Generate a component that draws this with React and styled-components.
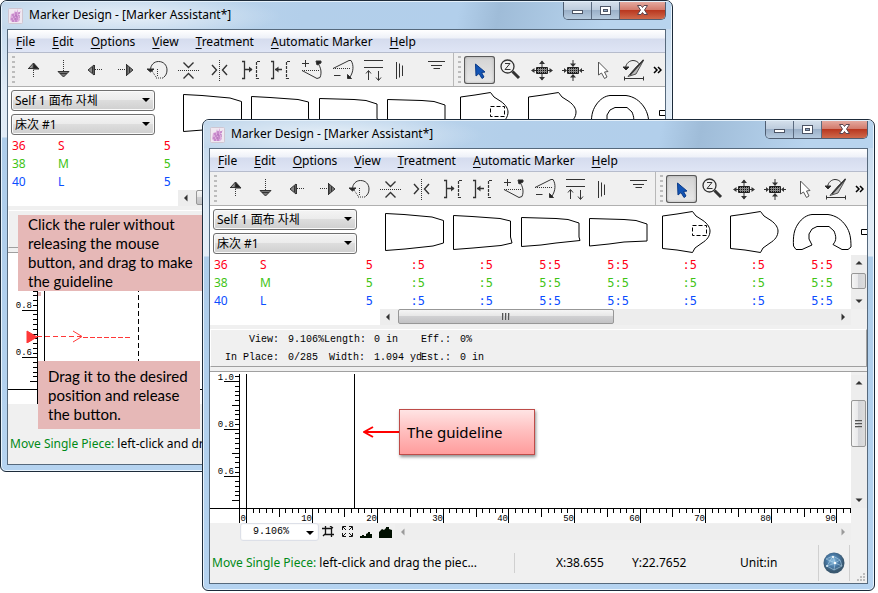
import { useState } from "react";
import styled, { createGlobalStyle, css } from "styled-components";

const menus = ["File", "Edit", "Options", "View", "Treatment", "Automatic Marker", "Help"];

const sizes = [
  { code: "36", name: "S", color: "#ff0018" },
  { code: "38", name: "M", color: "#3fc417" },
  { code: "40", name: "L", color: "#0a4dff" },
];
const counts = ["5", ":5", ":5", "5:5", "5:5", ":5", ":5", "5:5"];

const pieces = [
  "M5.5 7.5L24 8.5L52 11L63.5 14.5V37L53 40L25 43L5.5 44.5Z",
  "M5.5 9.5L24 10.5L52 12.5L62.5 15V31L64 37L53 39.5L25 42L5.5 43.5Z",
  "M5.5 11.5L40 12.5L52 13.5L63 17V31L64 34.5L40 37L25 39L5.5 40.5Z",
  "M5.5 12.5L40 13.5L52 14.5L63 18V35L40 36L25 38L5.5 40Z",
  "M10.5 10L25 8L40.5 5.5L44 10L51 14.5C56 18 58 22 58 25C58 30 55 34 50 37L43 42L40.5 46.5L25 44L10.5 42.5Z",
  "M10.5 10L25 8L40.5 5.5L44 10L51 14.5C56 18 58 22 58 25C58 30 55 34 50 37L43 42L40.5 46.5L25 44L10.5 42.5Z",
  "M5.5 40C5 30 6 24 10 18C14 12 19 9 24 8.5H40C48 9.5 54 14 58 20C62 26 63 32 63 41L60 43.5H54L45 38.5C49 34 48 30 46 25L41 20.5H29L24 23L21 28V33L24 39L14 43.5H8Z",
  "M5.5 23.5H30V28.5H5.5Z",
];

const moveTools = [
  { name: "Move up", art: <><path d="M15.5 7L21 13H10Z" fill="#999" stroke="none" /><path d="M15.5 7L21 13H15Z" fill="#222" /><path d="M10 12.5H21M15.5 7L10.5 12.5" /><path className="dots" d="M15.5 14V22" /></> },
  { name: "Move down", art: <><path className="dots" d="M14.5 4V15" /><path d="M9 15.5H20L14.5 21Z" fill="#777" /><path d="M9 15.5H20M11 17.5H18" /></> },
  { name: "Move left", art: <><path d="M8 14L14 9V19Z" fill="#888" /><path d="M14.5 9V19M12.5 11V17" /><path className="dots" d="M15 13.5H23" /></> },
  { name: "Move right", art: <><path className="dots" d="M7 13.5H15" /><path d="M22 14L16 9V19Z" fill="#777" /><path d="M15.5 8V20M18.5 11V17" /></> },
  { name: "Rotate", art: <><path d="M8.500 14C8.500 9 12 5.500 16.500 5.500C21.500 5.500 25 9 25 14C25 17 24 19.500 21.500 21.500" /><path className="dots" d="M21 22H13M15.500 13V21M10 15L14 21" /><path d="M5 13H12L8.500 16Z" fill="#222" /></> },
  { name: "Flip vertical", art: <><path d="M10.500 6.500L15.500 11.500L20.500 6.500M10.500 22.500L15.500 17.500L20.500 22.500" strokeWidth="1.400" /><path className="dots" d="M5 14.500H26" /></> },
  { name: "Flip horizontal", art: <><path d="M8 9L12.500 14L8 19M23 9L18.500 14L23 19" strokeWidth="1.400" /><path className="dots" d="M15.500 4V25" /></> },
  { name: "Butt right", art: <><path d="M7 5.500H9.500V22.500H7M10 13.500H17" strokeWidth="1.300" /><path d="M14 10.500V16.500L17.500 13.500Z" fill="#333" stroke="none" /><path d="M25 5.500H21.500V22.500H25" strokeDasharray="3 1" strokeWidth="1.200" /></> },
  { name: "Butt left", art: <><path d="M5 5.500H7.500V22.500H5M9 13.500H16" strokeWidth="1.300" /><path d="M12.500 10.500V16.500L9 13.500Z" fill="#333" stroke="none" /><path d="M24 5.500H20.500V22.500H24" strokeDasharray="3 1" strokeWidth="1.200" /></> },
  { name: "Tilt up", art: <><path d="M8.500 4V11M5 7.500H12" /><path d="M5 14.500L20 22.500L23 21.500C25 17 24 11 20.500 7" /><path className="dots" d="M5 14.500H23" /><path d="M19 5H24V7L20 9Z" fill="#222" /></> },
  { name: "Tilt down", art: <><path d="M5 12.500L21 4.500H23C26 9 25.500 16 22 21" /><path className="dots" d="M5 12.500H23" /><path d="M19.500 18.500V22.500H23.500Z" fill="#222" /><path d="M6 19.500H12.500" /></> },
  { name: "Align edge", art: <><path d="M5 4.500H24M5 11.500H24M9.500 15V24M19.500 15V24" /><path d="M7 17.500L9.500 14.500L12 17.500M17 21.500L19.500 24.500L22 21.500" /></> },
  { name: "Align left", art: <path d="M6.500 6V23M9.500 7.500V21.500M12.500 9.500V20" /> },
  { name: "Align top", art: <path d="M7 5.500H24M10 9.500H21M12.500 12.500H19" /> },
];

const hatch = (
  <>
    <path d="M10.500 11.500H21.500V17.500H10.500Z" fill="#888" stroke="#222" />
    <path d="M11 12.500H21M11 14.500H21M11 16.500H21" strokeDasharray="1 1" stroke="#111" />
  </>
);

const selectTools = [
  { name: "Select", art: <path d="M11.500 8L12 20L15 17.500L18 22.500L20 21L17.500 16.500L21 16Z" fill="#1254b5" stroke="#0b3b88" /> },
  { name: "Zoom", art: <><circle cx="12.500" cy="10.500" r="6.500" strokeWidth="1.300" /><path d="M10 7.500H15L10 13.500H15.500" /><path d="M17.500 15.500L24 22" strokeWidth="3" /></> },
  { name: "Spread", art: <>{hatch}<path d="M16 5V11M16 18V24M6 14.500H10M22 14.500H26" /><path d="M13 8L16 4.500L19 8ZM13 21L16 24.500L19 21ZM8.500 12L5 14.500L8.500 17ZM23.500 12L27 14.500L23.500 17Z" fill="#333" stroke="none" /></> },
  { name: "Gather", art: <>{hatch}<path d="M16 4V10M16 19V25M5 14.500H9M23 14.500H27" /><path d="M13 7.500L16 11L19 7.500ZM13 21.500L16 18L19 21.500ZM7 12L10 14.500L7 17ZM25 12L22 14.500L25 17Z" fill="#333" stroke="none" /></> },
  { name: "Pick", art: <path d="M10.500 6V19L13.500 17L16.500 22.500L19 21L16.500 16L20 15.500Z" fill="#fff" stroke="#555" /> },
  { name: "Angle", art: <><path d="M5 22.500H25M5.500 20.500V24.500M24.500 20.500V24.500" /><path d="M24.500 4L17 11L9 20.500L17 18L22 9Z" fill="#bbb" strokeWidth=".8" /><path d="M24.500 4L11 19" strokeWidth="1.400" /><path d="M6.500 12C7 7 11 4.500 14 4.500C17 4.500 19 6 20.500 8" /><path d="M4 11H10L7 14Z" fill="#222" /></> },
];

const Icon = ({ children }) => <ToolArt viewBox="0 0 31 28" aria-hidden="true">{children}</ToolArt>;

const Arrow = ({ dir }) => {
  const d = { up: "M.5 5.500L4 2L7.500 5.500Z", down: "M.5 2.500L4 6L7.500 2.500Z", left: "M2 4L5.500 .5V7.500Z", right: "M6 4L2.500 .5V7.500Z" }[dir];
  return <svg width="8" height="8" viewBox="0 0 8 8" aria-hidden="true"><path d={d} fill="currentColor" /></svg>;
};

const ScrollBar = ({ vertical, thumb, offset, idle }) => (
  <Track $vertical={vertical} $idle={idle}>
    <ScrollButton aria-label={vertical ? "Scroll up" : "Scroll left"}><Arrow dir={vertical ? "up" : "left"} /></ScrollButton>
    <Lane $vertical={vertical}>
      {thumb && (
        <Thumb $vertical={vertical} $size={thumb} $offset={offset}>
          {(!vertical || thumb > 20) && <Gripper $vertical={vertical} />}
        </Thumb>
      )}
    </Lane>
    <ScrollButton aria-label={vertical ? "Scroll down" : "Scroll right"}><Arrow dir={vertical ? "down" : "right"} /></ScrollButton>
  </Track>
);

const Rulers = ({ guide, dragging }) => {
  const rows = Array.from({ length: 27 }, (_, i) => i);
  const cols = Array.from({ length: 140 }, (_, i) => i);
  const heights = ["1.0", "0.8", "0.6"];
  return (
    <Drawing>
      <path d="M29.500 2V151M36.500 2V151" />
      <line x1="0" x2="100%" y1="136.500" y2="136.500" />
      <path d={`M${guide + 0.5} 2V136`} strokeDasharray={dragging ? "5 3" : "none"} />
      {rows.map((i) => {
        const y = Math.round(9 + (i - 1) * 4.77) + 0.5;
        const len = (i - 1) % 10 === 0 ? 15 : (i - 1) % 5 === 0 ? 7 : 4;
        return y < 135 && !(dragging && y < 12) ? <path key={i} d={`M${29 - len} ${y}H29`} /> : null;
      })}
      {heights.map((t, i) => (dragging && i === 0 ? null : <text key={t} x="24" y={8 + i * 47}>{t}</text>))}
      {!dragging && cols.map((i) => {
        const x = Math.round(36 + i * 6.56) + 0.5;
        const len = i % 10 === 0 ? 15 : i % 5 === 0 ? 8 : 4;
        return <path key={i} d={`M${x} 137V${137 + len}`} />;
      })}
      {!dragging && cols.slice(0, 91).filter((i) => i % 10 === 0).map((i) => (
        <text key={i} x={Math.round(36 + i * 6.56)} y="149">{i}</text>
      ))}
    </Drawing>
  );
};

const MarkerWindow = ({ guide, dragging }) => {
  const [fabric, setFabric] = useState("Self 1 面布 자체");
  const [tool, setTool] = useState("Select");

  return (
    <Frame>
      <TitleBar>
        <AppIcon viewBox="0 0 15 16" aria-hidden="true">
          <rect x=".5" y=".5" width="14" height="15" rx="1" fill="#f0e8f1" stroke="#cfc6d2" />
          <path d="M3 6L6 5L7 2L8 5L10 1L10 5L13 3L11 7L12 12L10 14H4L2 12Z" fill="#dcaadc" />
          <path d="M4 7H10M5 9H12M3 11H10M4 13H9M8 4V13M11 4V8" stroke="#b069b8" strokeDasharray="2 1" />
        </AppIcon>
        <Title>Marker Design - [Marker Assistant*]</Title>
        <Caption>
          <CaptionButton aria-label="Minimize"><svg width="13" height="10"><rect x="1.500" y="4.500" width="10" height="3" fill="#fff" stroke="#4d5566" /></svg></CaptionButton>
          <CaptionButton aria-label="Maximize"><svg width="13" height="10"><rect x="1.500" y=".5" width="10" height="8" fill="#fff" stroke="#4d5566" /><rect x="4.500" y="3.500" width="4" height="2" fill="#8fa5c0" stroke="#4d5566" /></svg></CaptionButton>
          <CaptionButton $close aria-label="Close"><svg width="13" height="11" viewBox="0 0 13 11"><path d="M1.500 .5H5L6.500 2.500L8 .5H11.500L8.500 5L11.500 9.500H8L6.500 7.500L5 9.500H1.500L4.500 5Z" fill="#fff" stroke="#5b4650" /></svg></CaptionButton>
        </Caption>
      </TitleBar>
      <Client>
        <MenuBar>
          {menus.map((m) => <MenuButton key={m}><u>{m[0]}</u>{m.slice(1)}</MenuButton>)}
        </MenuBar>
        <Toolbars>
          <Toolbar>
            <Grip />
            {moveTools.map((t) => <ToolButton key={t.name} aria-label={t.name}><Icon>{t.art}</Icon></ToolButton>)}
          </Toolbar>
          <Toolbar $last>
            <Grip />
            {selectTools.map((t) => (
              <ToolButton key={t.name} aria-label={t.name} $on={tool === t.name} onClick={() => setTool(t.name)}>
                <Icon>{t.art}</Icon>
              </ToolButton>
            ))}
            <MoreButton aria-label="More tools">
              <svg width="9" height="8" viewBox="0 0 9 8"><path d="M1 1L4 4L1 7M5 1L8 4L5 7" fill="none" stroke="#000" strokeWidth="1.500" /></svg>
            </MoreButton>
          </Toolbar>
        </Toolbars>
        <Board>
          <PieceRow>
            <Pickers>
              <Picker>
                <select aria-label="Fabric" value={fabric} onChange={(e) => setFabric(e.target.value)}>
                  <option>Self 1 面布 자체</option>
                </select>
              </Picker>
              <Picker>
                <select aria-label="Bed"><option>床次 #1</option></select>
              </Picker>
            </Pickers>
            <Pieces>
              {pieces.map((d, i) => (
                <PieceArt key={i} viewBox="0 0 68 49">
                  <path d={d} />
                  {i === 4 && <rect x="40.500" y="19.500" width="14" height="10" strokeDasharray="4 2" />}
                </PieceArt>
              ))}
            </Pieces>
          </PieceRow>
          <SizeRow>
            <SizeTable>
              <tbody>
                {sizes.map((s) => (
                  <SizeLine key={s.code} $color={s.color}>
                    <th>{s.code}</th>
                    <th>{s.name}</th>
                    {counts.map((c, i) => <td key={i}>{dragging && i > 0 ? "" : c}</td>)}
                    <td />
                  </SizeLine>
                ))}
              </tbody>
            </SizeTable>
            <ScrollBar vertical thumb={16} offset={2} />
          </SizeRow>
          <BoardScroll><ScrollBar thumb={216} offset={0} /></BoardScroll>
        </Board>
        <Info>
          {!dragging && (
            <>
              <dt>View:</dt><dd>9.106%</dd><dt>Length:</dt><dd>0 in</dd><dt>Eff.:</dt><dd>0%</dd>
              <dt>In Place:</dt><dd>0/285</dd><dt>Width:</dt><dd>1.094 yd</dd><dt>Est.:</dt><dd>0 in</dd>
            </>
          )}
        </Info>
        <Table>
          <Rulers guide={guide} dragging={dragging} />
          <TableScroll><ScrollBar vertical thumb={47} offset={9} /></TableScroll>
        </Table>
        <ZoomBar>
          {!dragging && (
            <>
              <Picker $zoom>
                <select aria-label="Zoom level"><option>9.106%</option></select>
              </Picker>
              <ZoomButton aria-label="Zoom to frame"><svg width="13" height="12"><path d="M3.500 0V8.500H12M0 2.500H9.500V11M8 0L11 2M3 8L1 10" fill="none" stroke="#111" strokeWidth="1.300" /></svg></ZoomButton>
              <ZoomButton aria-label="Fit all"><svg width="13" height="12"><path d="M1.500 4V.5H5M2 1L5 4M8 .5H11.500V4M11 1L8 4M1.500 7V10.500H5M2 10L5 7M8 10.500H11.500V7M11 10L8 7" fill="none" stroke="#111" /></svg></ZoomButton>
              <ZoomButton aria-label="Small steps"><svg width="13" height="12"><path d="M0 12V10H2V9H4V10H6V8L8 7V6H10V8H12V12Z" fill="#000f00" /></svg></ZoomButton>
              <ZoomButton aria-label="Large steps"><svg width="13" height="12"><path d="M0 12V6L3 3L5 4L7 2V1H10V3L13 4V12Z" fill="#000f00" /></svg></ZoomButton>
              <ScrollBar idle />
            </>
          )}
        </ZoomBar>
        <Status>
          <Hint><b>Move Single Piece:</b> left-click and drag the piec...</Hint>
          <Readout $wide>X:38.655</Readout>
          <Readout>Y:22.7652</Readout>
          <Readout $unit>Unit:in</Readout>
          <Globe>
            <svg width="22" height="22" viewBox="0 0 22 22" aria-hidden="true">
              <defs>
                <radialGradient id="sea" cx=".45" cy=".4">
                  <stop offset="0" stopColor="#8fbfe0" />
                  <stop offset=".6" stopColor="#4878a4" />
                  <stop offset="1" stopColor="#3a5870" />
                </radialGradient>
              </defs>
              <circle cx="11" cy="11" r="10.500" fill="url(#sea)" />
              <path d="M3 7L10 4L17 8L19 14L11 18L4 14L10 4L12 11L19 14M3 7L12 11L4 14M12 11L11 18M12 11L17 8" fill="none" stroke="#bfe0f2" strokeWidth=".5" />
              <circle cx="10" cy="5" r="1" fill="#fff" /><circle cx="12" cy="11" r="1.200" fill="#fff" /><circle cx="4" cy="14" r=".9" fill="#e6f6ff" />
            </svg>
          </Globe>
          <Corner viewBox="0 0 9 9" aria-hidden="true">
            <path d="M7 0h2v2h-2zM4 3h2v2h-2zM7 3h2v2h-2zM1 6h2v2h-2zM4 6h2v2h-2zM7 6h2v2h-2z" fill="#bdbdbd" />
          </Corner>
        </Status>
      </Client>
    </Frame>
  );
};

export default function App() {
  return (
    <Desktop>
      <Global />
      <Back>
        <MarkerWindow guide={130} dragging />
        <Note $x={18} $y={215} $w={185}>Click the ruler without<br />releasing the mouse<br />button, and drag to make<br />the guideline</Note>
        <DragArrow viewBox="0 0 105 54" aria-hidden="true">
          <path d="M12 3h3v4h-3z" fill="#e6b8b7" />
          <path d="M1 42L11 48L1 54Z" fill="#ff3838" />
          <path d="M11 47.500H55" strokeDasharray="5 3" />
          <path d="M47 42L56 47.500L47 53" />
          <path d="M57 48.500H104" strokeDasharray="5 2" />
        </DragArrow>
        <Note $x={38} $y={361} $w={162} $low>Drag it to the desired<br />position and release<br />the button.</Note>
      </Back>
      <Front>
        <MarkerWindow guide={144} />
        <GuideNote>
          <svg width="36" height="14" viewBox="0 0 36 14" aria-hidden="true">
            <path d="M36 7H1M10 2L1 7L10 12" fill="none" stroke="#ff0000" strokeWidth="2" />
          </svg>
          <span>The guideline</span>
        </GuideNote>
      </Front>
    </Desktop>
  );
}

const Global = createGlobalStyle`
* {
    box-sizing: border-box;
}
body {
    margin: 0;
    background: #fff;
    font: 12px/18px "Noto Sans", "Noto Sans CJK SC", "Noto Sans CJK KR", sans-serif;
    color: #000;
}
button, select {
    font: inherit;
    color: inherit;
    margin: 0;
    padding: 0;
    border: 0;
    background: none;
}
svg {
    display: block;
    flex: none;
}
`;
const Desktop = styled.main`
  position: relative;
  min-height: 100vh;
  overflow: hidden;
`;
const Back = styled.section`
  position: absolute;
  left: 0;
  right: 205px;
  top: 0;
`;
const Front = styled.section`
  position: absolute;
  left: 202px;
  right: 3px;
  top: 119px;
`;
const Frame = styled.div`
  border: 1px solid #1d2b3a;
  border-radius: 7px 7px 6px 6px;
  padding: 0 6px 6px;
  background: linear-gradient(#bdd5ec 0, #dfeaf5 90px, #e2ecf6 136px, #aecdea 137px, #b5d3f0 100%);
  box-shadow: inset 0 0 0 1px #e9f4fd;
  overflow: hidden;
`;
const TitleBar = styled.header`
  display: flex;
  align-items: center;
  height: 28px;
  margin: 0 -5px;
  padding: 0 5px 0 6px;
  background:
    radial-gradient(ellipse 150px 22px at 130px 14px, #ffffffa0, #ffffff00),
    linear-gradient(100deg, #c3d8ec 0 10%, #b3cfea 45%, #b2cfeb 68%, #9fbcd8 74%, #b8d4ee 90%);
  border-top: 1px solid #e4f0fa;
`;
const AppIcon = styled.svg`
  width: 15px;
  height: 16px;
`;
const Title = styled.h1`
  flex: 1;
  margin: 0;
  padding: 0 0 2px 6px;
  font-size: 12px;
  font-weight: 400;
  white-space: nowrap;
`;
const Caption = styled.div`
  display: flex;
  align-self: flex-start;
  height: 18px;
  border: 1px solid #4f5e72;
  border-top: 0;
  border-radius: 0 0 5px 5px;
  overflow: hidden;
`;
const CaptionButton = styled.button`
  display: flex;
  align-items: center;
  justify-content: center;
  width: 28px;
  border-right: 1px solid #5b6b80;
  background: linear-gradient(#d4dfeb, #bccbdc 48%, #9bb0c8 50%, #b6cade);
  ${(p) => p.$close && css`
    width: 45px;
    border: 0;
    background: linear-gradient(#e4a99f, #d2796a 48%, #b93820 50%, #cf6a4c);
  `}
`;
const Client = styled.div`
  border: 1px solid #56697c;
  background: #f0f0f0;
`;
const MenuBar = styled.nav`
  display: flex;
  gap: 1px;
  height: 23px;
  padding-top: 1px;
  border-bottom: 1px solid #b6bccc;
  background: linear-gradient(#fff, #eef1f8 8px, #d5dcee 9px, #dfe5f5);
`;
const MenuButton = styled.button`
  padding: 0 8px;
  white-space: nowrap;
  u {
    text-underline-offset: 2px;
  }
`;
const Toolbars = styled.div`
  display: flex;
  height: 34px;
  border-bottom: 1px solid #b0b0b0;
  overflow: hidden;
`;
const Toolbar = styled.div`
  display: flex;
  align-items: center;
  padding: 0 1px 0 4px;
  border-right: 1px solid #b8b8b8;
  ${(p) => p.$last && css`
    flex: 1;
    border-right: 0;
  `}
`;
const Grip = styled.i`
  width: 3px;
  height: 27px;
  margin-right: 3px;
  background: repeating-linear-gradient(#bcbcbc 0 2px, #f0f0f0 2px 5px);
`;
const ToolButton = styled.button`
  width: 31px;
  height: 28px;
  border-radius: 3px;
  ${(p) => p.$on && css`
    background: linear-gradient(#d2d2d2, #e9e9e9);
    box-shadow: inset 0 0 0 1px #5a5a5a, inset 0 0 3px 1px #aaa;
  `}
`;
const ToolArt = styled.svg`
  width: 31px;
  height: 28px;
  fill: none;
  stroke: #333;
  .dots {
    stroke-dasharray: 1 1;
  }
`;
const MoreButton = styled.button`
  margin-left: 3px;
`;
const Board = styled.div`
  background: #fff;
`;
const PieceRow = styled.div`
  display: flex;
  height: 49px;
`;
const Pickers = styled.div`
  display: flex;
  flex-direction: column;
  gap: 3px;
  width: 170px;
  flex: none;
  padding: 3px 0 0 3px;
`;
const Picker = styled.label`
  position: relative;
  width: 144px;
  height: 21px;
  select {
    display: block;
    appearance: none;
    width: 100%;
    height: 100%;
    padding-left: 3px;
    border: 1px solid #707070;
    border-radius: 3px;
    background: linear-gradient(#f4f4f4, #ebebeb 48%, #dddddd 50%, #cfcfcf);
    box-shadow: inset 0 0 0 1px #fafafa;
  }
  &::after {
    content: "";
    position: absolute;
    right: 5px;
    top: 8px;
    border: 4px solid transparent;
    border-top-color: #000;
    border-bottom: 0;
    pointer-events: none;
  }
  ${(p) => p.$zoom && css`
    width: 79px;
    height: 18px;
    margin-left: 30px;
    font: 10px/16px "Liberation Mono", monospace;
    select {
      padding-left: 12px;
      border-color: #dde0e8;
      background: #fff;
    }
  `}
`;
const Pieces = styled.div`
  display: flex;
  flex: 1;
  overflow: hidden;
`;
const PieceArt = styled.svg`
  width: 68px;
  height: 49px;
  fill: none;
  stroke: #000;
`;
const SizeRow = styled.div`
  display: flex;
`;
const SizeTable = styled.table`
  flex: 1;
  table-layout: fixed;
  border-collapse: collapse;
  width: 0;
`;
const SizeLine = styled.tr`
  height: 18px;
  color: ${(p) => p.$color};
  th, td {
    width: 68px;
    padding: 2px 0 0;
    line-height: 16px;
    white-space: nowrap;
  }
  th {
    width: 46px;
    padding-left: 4px;
    font-weight: 400;
    text-align: left;
  }
  td {
    font-family: "DejaVu Sans Mono", monospace;
    text-align: right;
  }
  td:nth-child(3) {
    width: 71px;
  }
  td:nth-child(4) {
    width: 52px;
  }
  td:last-child {
    width: auto;
  }
`;
const BoardScroll = styled.div`
  display: flex;
  height: 16px;
  padding-left: 170px;
  border-right: 16px solid #f0f0f0;
`;
const Track = styled.div`
  display: flex;
  flex: ${(p) => (p.$vertical ? "none" : "1")};
  flex-direction: ${(p) => (p.$vertical ? "column" : "row")};
  width: ${(p) => (p.$vertical ? "16px" : "auto")};
  background: ${(p) => (p.$idle ? "#eeeeee" : "#ededed")};
  color: ${(p) => (p.$idle ? "#9a9a9a" : "#333")};
`;
const ScrollButton = styled.button`
  display: flex;
  align-items: center;
  justify-content: center;
  flex: none;
  min-width: 16px;
  height: 16px;
`;
const Lane = styled.div`
  display: flex;
  flex: 1;
  flex-direction: ${(p) => (p.$vertical ? "column" : "row")};
  min-height: 0;
`;
const Thumb = styled.div`
  display: flex;
  align-items: center;
  justify-content: center;
  flex: none;
  border: 1px solid #979797;
  border-radius: 2px;
  ${(p) => p.$vertical
    ? css`
      height: ${p.$size}px;
      width: 15px;
      margin-top: ${p.$offset}px;
      background: linear-gradient(90deg, #f5f5f5, #e8e8ea 48%, #d3d4d8 50%, #dcdcdc);
    `
    : css`
      width: ${p.$size}px;
      height: 15px;
      margin-left: 2px;
      background: linear-gradient(#f5f5f5, #e6e6e6 48%, #d0d0d2 50%, #c2c2c4);
    `}
`;
const Gripper = styled.i`
  width: ${(p) => (p.$vertical ? "7px" : "8px")};
  height: ${(p) => (p.$vertical ? "8px" : "7px")};
  background: repeating-linear-gradient(${(p) => (p.$vertical ? "180deg" : "90deg")}, #555 0 1px, #bbb 1px 2px, transparent 2px 3px);
`;
const Info = styled.dl`
  display: grid;
  grid-template-columns: 68px 45px 41px 56px 30px auto;
  align-content: start;
  height: 38px;
  margin: 4px 0;
  padding-top: 1px;
  border: 1px solid #a0a0a0;
  border-top-color: #fff;
  border-left-color: #fff;
  font: 10px/18px "Liberation Mono", monospace;
  white-space: nowrap;
  dt {
    text-align: right;
  }
  dd {
    margin: 0;
    padding-left: 9px;
  }
`;
const Table = styled.div`
  display: flex;
  border-top: 1px solid #a0a0a0;
`;
const Drawing = styled.svg`
  flex: 1;
  min-width: 0;
  height: 151px;
  background: #fff;
  stroke: #000;
  shape-rendering: crispEdges;
  text {
    font: 9px "Liberation Mono", monospace;
    text-anchor: end;
    stroke: none;
    fill: #000;
  }
`;
const TableScroll = styled.div`
  display: flex;
  padding: 3px 0 15px;
`;
const ZoomBar = styled.div`
  display: flex;
  align-items: center;
  height: 18px;
  padding-right: 16px;
`;
const ZoomButton = styled.button`
  width: 19px;
  height: 16px;
  svg {
    margin: 2px auto;
  }
`;
const Status = styled.footer`
  display: flex;
  align-items: center;
  height: 42px;
  padding: 3px 2px 1px;
  line-height: 20px;
  white-space: nowrap;
`;
const Hint = styled.p`
  flex: 1;
  margin: 0;
  height: 20px;
  border-right: 1px solid #d0d0d0;
  b {
    font-weight: 400;
    color: #008a17;
  }
`;
const Readout = styled.span`
  width: ${(p) => (p.$wide ? "117px" : p.$unit ? "78px" : "108px")};
  padding-left: ${(p) => (p.$wide ? "41px" : "0")};
`;
const Globe = styled.div`
  display: flex;
  align-items: center;
  justify-content: center;
  width: 32px;
  height: 36px;
  border: 1px solid #d0d0d0;
  border-width: 0 1px;
`;
const Corner = styled.svg`
  align-self: flex-end;
  width: 9px;
  height: 9px;
  margin-left: 6px;
`;
const Note = styled.p`
  position: absolute;
  left: ${(p) => p.$x}px;
  top: ${(p) => p.$y}px;
  width: ${(p) => p.$w}px;
  margin: 0;
  padding: ${(p) => (p.$low ? "6px 10px 5px" : "0 10px")};
  background: #e6b8b7;
  font: 15px/19px Lato, sans-serif;
  white-space: nowrap;
`;
const DragArrow = styled.svg`
  position: absolute;
  left: 26px;
  top: 289px;
  width: 105px;
  height: 54px;
  fill: none;
  stroke: #ff3838;
  path:first-child {
    stroke: none;
  }
`;
const GuideNote = styled.div`
  position: absolute;
  left: 161px;
  top: 290px;
  display: flex;
  align-items: center;
  span {
    width: 136px;
    padding: 12px 7px;
    border: 1px solid #be4b48;
    background: linear-gradient(#ffe4e4, #ffbdbd 50%, #ff9c9c);
    box-shadow: 1px 2px 3px #00000070;
    font-size: 15px;
    line-height: 20px;
  }
`;
